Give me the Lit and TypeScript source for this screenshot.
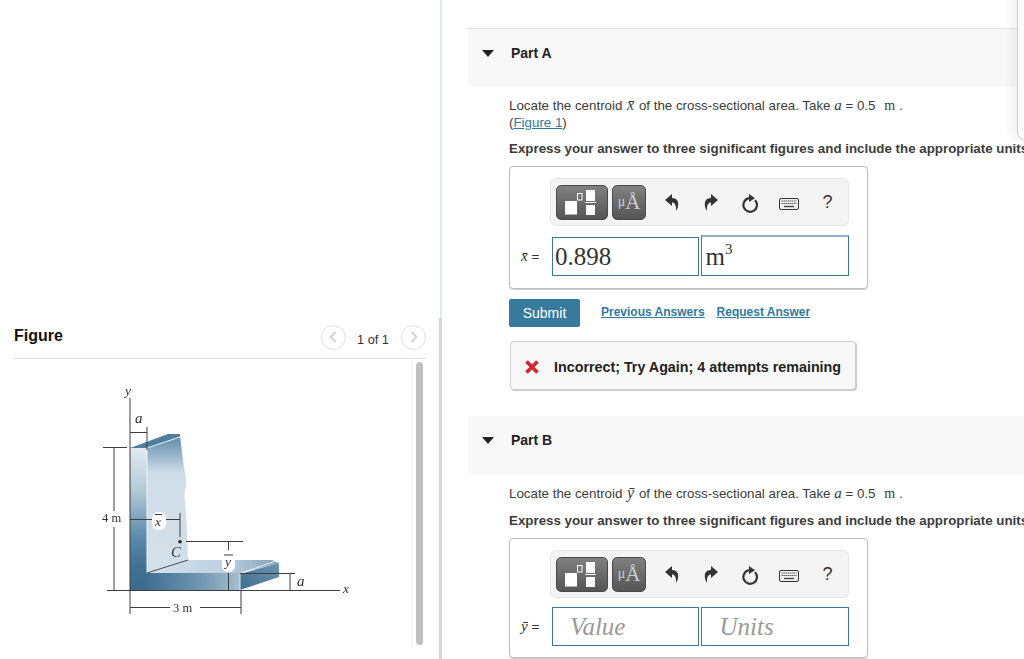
import { LitElement, html, css, svg } from "lit";
import { customElement } from "lit/decorators.js";

function figureArt() {
  return svg`
    <defs>
      <linearGradient id="front" gradientUnits="userSpaceOnUse" x1="0" y1="448" x2="0" y2="590">
        <stop offset="0" stop-color="#e2eaf0"/><stop offset="0.3" stop-color="#b4c9d8"/>
        <stop offset="0.62" stop-color="#5f8bab"/><stop offset="0.85" stop-color="#3f6f91"/><stop offset="1" stop-color="#3c6b8e"/>
      </linearGradient>
      <linearGradient id="back" x1="0" y1="0" x2="0" y2="1">
        <stop offset="0" stop-color="#5d8aa9"/><stop offset="0.27" stop-color="#cfdde8"/><stop offset="1" stop-color="#d3e0ea"/>
      </linearGradient>
      <linearGradient id="floorFront" gradientUnits="userSpaceOnUse" x1="147" y1="0" x2="240" y2="0">
        <stop offset="0" stop-color="#417092"/><stop offset="0.55" stop-color="#6e94af"/><stop offset="1" stop-color="#a6bdcf"/>
      </linearGradient>
      <linearGradient id="floorTop" x1="0" y1="0" x2="1" y2="0">
        <stop offset="0" stop-color="#d7e3ec"/><stop offset="0.6" stop-color="#bdd0de"/><stop offset="1" stop-color="#7fa0b8"/>
      </linearGradient>
      <linearGradient id="side" x1="0" y1="1" x2="1" y2="0">
        <stop offset="0" stop-color="#3d6d8f"/><stop offset="1" stop-color="#6d94af"/>
      </linearGradient>
    </defs>
    <path d="M130 448 L147 448 L180 437 L180 434 L168 434 Z" fill="#4f7e9f"/>
    <path d="M147 448 L180 436 C182 450 183 465 186 478 C187 486 184 490 184.5 498 C186 512 187 530 188 560 L147 573 Z" fill="url(#back)"/>
    <path d="M147 448 L180 437" stroke="#e9f0f5" stroke-width="1" fill="none"/>
    <path d="M147 573 L188 560 L272 560 L279 563 L240 573 Z" fill="url(#floorTop)"/>
    <path d="M130 448 H147 V590 H130 Z" fill="url(#front)"/>
    <path d="M147 573 H240 V590 H147 Z" fill="url(#floorFront)"/>
    <path d="M240 574 L279 563 V577 L240 590 Z" fill="url(#side)"/>
    <path d="M147 448 V573" stroke="#edf3f7" stroke-width="1"/>
    <path d="M240 574 V590" stroke="#dfe9f0" stroke-width="1"/>
    <path d="M241 573 L276 561" stroke="#e9f0f5" stroke-width="1" fill="none"/>
    <path d="M147 573 L188 560" stroke="#4a4a4a" stroke-width="1" fill="none"/>
    <rect x="152" y="512" width="14" height="18" rx="6" fill="#fff"/>
    <rect x="222" y="556" width="13" height="16" rx="6" fill="#fff"/>
    <g stroke="#3d3d3d" stroke-width="1" fill="none">
      <path d="M130 398 V590"/>
      <path d="M107 590.5 H340"/>
      <path d="M130 432.5 H147 M147 427 V450"/>
      <path d="M103 447.5 H127 M114 448 V511 M114 527 V590"/>
      <path d="M130 519.5 H152 M166 519.5 H180 M180 513 V537"/>
      <path d="M186 541.5 H243 M228.5 542 V550 M228.5 573 V590"/>
      <path d="M240 573.5 H295 M290 574 V590"/>
      <path d="M130 590 V614 M241 590 V614"/>
      <path d="M130 607.5 H170 M200 607.5 H241"/>
      <path d="M155 514.5 H162 M224 555 H233"/>
    </g>
    <circle cx="180" cy="541.7" r="1.8" fill="#222"/>
    <g class="fig-label">
      <text class="it" x="125" y="395">y</text>
      <text class="it big" x="135" y="423">a</text>
      <text x="102" y="522">4 m</text>
      <text class="it" x="155" y="526">x</text>
      <text class="it big" x="171" y="557">C</text>
      <text class="it" x="225" y="566">y</text>
      <text class="it big" x="297" y="586">a</text>
      <text class="it" x="343" y="593">x</text>
      <text x="173" y="612">3 m</text>
    </g>`;
}

const arrow = (flip: boolean) => html`<svg viewBox="0 0 14 17" width="14" height="17">
  <path transform=${flip ? "translate(14 0) scale(-1 1)" : ""} fill="#333" d="M7 0 L0 6 L7 12 V8.5 C10 8.5 11.5 12 11 17 C14 13 15 4 7 4 Z"/></svg>`;

const reload = html`<svg class="low-s" viewBox="0 0 16 19" width="16" height="19">
  <path d="M13 6.2 A6.8 6.8 0 1 1 8 4.2" fill="none" stroke="#333" stroke-width="2.2"/>
  <path d="M7 0 L13 4.2 L7 8 Z" fill="#333"/></svg>`;

const keyboard = html`<svg class="low" viewBox="0 0 20 12" width="20" height="12">
  <rect x="0.5" y="0.5" width="19" height="11" rx="1.5" fill="#f2f2f2" stroke="#333"/>
  <path d="M2.5 3 H17.5 M2.5 5.5 H17.5" stroke="#444" stroke-width="1.2" stroke-dasharray="1.3 .7"/>
  <path d="M5 8.5 H15" stroke="#444" stroke-width="1.4"/></svg>`;

const templates = html`<svg viewBox="0 0 31 25" width="31" height="25">
  <rect x="0" y="11" width="12" height="13.5" fill="#fff"/>
  <rect x="12.5" y="3.5" width="4.5" height="6.5" fill="none" stroke="#fff" stroke-width="1"/>
  <rect x="21" y="0" width="9" height="11" fill="#fff"/>
  <rect x="20" y="12" width="11" height="1" fill="#fff"/>
  <rect x="21" y="15" width="9" height="10" fill="#fff"/></svg>`;

@customElement("app-root")
export class AppRoot extends LitElement {
  static styles = css`
    :host { display: block; width: 1024px; height: 659px; overflow: hidden; position: relative; background: #fff;
      font-family: "Liberation Sans", Arial, sans-serif; color: #3a3a3a; }
    .page { display: flex; height: 659px; }
    .left { width: 439px; flex: none; padding: 323px 13px 0 13px; box-sizing: border-box; display: flex; flex-direction: column; }
    .rule { width: 3px; flex: none; background:
      linear-gradient(#c9d9ea, #c9d9ea) left bottom / 100% 341px no-repeat,
      linear-gradient(#e3e8ef, #e3e8ef) right top / 2px 318px no-repeat; }
    .fig-head { display: flex; align-items: center; height: 35px; border-bottom: 1px solid #dfe1e6; }
    .fig-title { font-size: 16px; font-weight: 700; color: #111; flex: 1; margin: -9px 0 0 1px; }
    .pager { display: flex; align-items: center; font-size: 12.8px; gap: 11px; color: #333; margin: -7px 0 0 0; }
    .pager span { margin: 4px 1px 0 0; }
    .circle { width: 25px; height: 25px; border: 1px solid #e2e2e2; border-radius: 50%; box-sizing: border-box; display: flex; align-items: center; justify-content: center; }
    .fig-body { display: flex; height: 286px; }
    svg.art { flex: 1; display: block; filter: blur(0.35px); }
    .track { width: 15px; box-sizing: border-box; padding: 3px 3px 0 4px; border-left: 1px solid #f2f2f2; }
    .thumb { height: 283px; background: #c0c0c0; border-radius: 4px; }
    .fig-label text { font: 12.5px "Liberation Serif", serif; fill: #333; }
    .fig-label text.it { font-style: italic; font-size: 13.5px; }
    .fig-label text.it.big { font-size: 15px; }

    .right { flex: 1; min-width: 0; padding: 28px 0 0 26px; }
    .part-head { height: 58px; background: #f8f8f8; display: flex; align-items: center; padding: 0 0 10px 14px; box-sizing: border-box; font-size: 14px; font-weight: 700; color: #222; gap: 17px; }
    .part-a { border-top: 1px solid #e2e2e2; height: 59px; }
    .caret { width: 0; height: 0; border-left: 6.5px solid transparent; border-right: 6.5px solid transparent; border-top: 7px solid #222; }
    .body { padding-left: 41px; font-size: 13.33px; line-height: 17px; color: #3c3c3c; white-space: nowrap; }
    .prompt { margin-top: 10px; }
    .math { font-family: "Liberation Serif", serif; font-style: italic; font-size: 15px; line-height: 0; }
    .math-bar { font-size: 16px; margin: 0 1px; }
    .unit { font-family: "Liberation Serif", serif; font-size: 14px; letter-spacing: .5px; margin-left: 5px; line-height: 0; }
    .fig-link { color: #2f7a9e; text-decoration: underline; }
    .instr { font-weight: 700; margin-top: 9px; }
    .answer { width: 359px; box-sizing: border-box; border: 1px solid #bdbdbd; border-radius: 4px; box-shadow: 0 1px 1px #ccc; margin-top: 9px; padding: 11px 18px 12px 11px; }
    .b-answer { height: 120px; }
    .toolbar { margin-left: 29px; height: 48px; box-sizing: border-box; background: #f4f4f4; border: 1px solid #e6e6e6; border-radius: 6px; display: flex; align-items: center; padding-left: 5px; }
    .btn { height: 35px; border-radius: 5px; border: 1px solid #4a4a4a; box-sizing: border-box; background: linear-gradient(#808080, #555); display: flex; align-items: center; justify-content: center; }
    .btn-t { width: 52px; padding-right: 3px; }
    .btn-u { width: 34px; margin-left: 4px; font: 14px "Liberation Serif", serif; color: #cfcfcf; white-space: nowrap; }
    .btn-u b { font-weight: 400; font-size: 21px; }
    .slot { width: 39px; display: flex; align-items: center; justify-content: center; font-size: 18px; color: #333; }
    .slot-first { margin-left: 6px; }
    .low { margin-top: 4px; }
    .low-s { margin-top: 2px; }
    .fields { display: flex; align-items: flex-end; margin-top: 9px; height: 41px; }
    .fields-b { margin-top: 7px; }
    .lab { width: 31px; font-size: 13.5px; color: #333; white-space: nowrap; margin-bottom: 11px; }
    .lab i { font-family: "Liberation Serif", serif; font-size: 15px; }
    .inp { box-sizing: border-box; width: 148px; height: 39px; border: 1px solid #3a7896; font: 25px/37px "Liberation Serif", serif; color: #333; padding-left: 2px; }
    .inp + .inp { margin-left: 2px; }
    .inp-up { height: 41px; border-top-color: #8fb3c8; border-top-width: 2px; padding: 1px 0 0 3px; }
    .inp sup { font-size: 15px; line-height: 0; vertical-align: 11px; }
    .ph { font-style: italic; color: #9a9a9a; padding-left: 17px; }
    .actions { display: flex; align-items: center; margin-top: 10px; }
    .submit { width: 71px; height: 28px; background: #387a9e; color: #fff; font-size: 14px; border-radius: 2px; display: flex; align-items: center; justify-content: center; }
    .links { margin-left: 21px; font-size: 12px; font-weight: 700; color: #2f7a9e; display: flex; gap: 12px; text-decoration: underline; margin-top: -1px; }
    .feedback { margin: 14px 0 26px 1px; width: 346px; height: 49px; box-sizing: border-box; border: 1px solid #cfcfcf; border-radius: 4px; background: #f8f8f8; box-shadow: 1px 1px 1px #c8c8c8; display: flex; align-items: center; padding: 3px 0 0 13px; gap: 14px; font-weight: 700; font-size: 14.3px; color: #222; }
    .prompt-b { margin-top: 11px; }
    .instr-b { margin-top: 10px; }
    .edge { position: absolute; right: -13px; top: -10px; width: 18px; height: 149px; border: 1px solid #ccc; border-radius: 0 0 0 9px; box-shadow: -6px 0 10px rgba(0, 0, 0, .05); background: #fcfcfc; }
  `;

  private toolbar() {
    return html`<div class="toolbar">
      <div class="btn btn-t">${templates}</div>
      <div class="btn btn-u">μ<b>Å</b></div>
      <div class="slot slot-first">${arrow(false)}</div>
      <div class="slot">${arrow(true)}</div>
      <div class="slot">${reload}</div>
      <div class="slot">${keyboard}</div>
      <div class="slot">?</div>
    </div>`;
  }

  render() {
    return html`<div class="page">
      <section class="left">
        <div class="fig-head">
          <div class="fig-title">Figure</div>
          <div class="pager">
            <div class="circle"><svg width="8" height="12" viewBox="0 0 8 12"><path d="M6.5 1 L1.5 6 L6.5 11" fill="none" stroke="#c4c4c4" stroke-width="1.3"/></svg></div>
            <span>1 of 1</span>
            <div class="circle"><svg width="8" height="12" viewBox="0 0 8 12"><path d="M1.5 1 L6.5 6 L1.5 11" fill="none" stroke="#c4c4c4" stroke-width="1.3"/></svg></div>
          </div>
        </div>
        <div class="fig-body">
          <svg class="art" viewBox="13 359 398 286" width="398" height="286">${figureArt()}</svg>
          <div class="track"><div class="thumb"></div></div>
        </div>
      </section>
      <div class="rule"></div>
      <main class="right">
        <div class="part-head part-a"><span class="caret"></span>Part A</div>
        <div class="body">
          <div class="prompt">Locate the centroid <span class="math math-bar">x̄</span> of the cross-sectional area. Take <span class="math">a</span> = 0.5 <span class="unit">m</span> .<br>(<span class="fig-link">Figure 1</span>)</div>
          <div class="instr">Express your answer to three significant figures and include the appropriate units.</div>
          <div class="answer">
            ${this.toolbar()}
            <div class="fields">
              <div class="lab"><i>x̄</i> =</div>
              <div class="inp">0.898</div>
              <div class="inp inp-up">m<sup>3</sup></div>
            </div>
          </div>
          <div class="actions">
            <div class="submit">Submit</div>
            <div class="links"><span>Previous Answers</span><span>Request Answer</span></div>
          </div>
          <div class="feedback">
            <svg width="16" height="16" viewBox="0 0 16 16"><path d="M2.5 2.5 L13.5 13.5 M13.5 2.5 L2.5 13.5" stroke="#d0282e" stroke-width="3.8"/></svg>
            <span>Incorrect; Try Again; 4 attempts remaining</span>
          </div>
        </div>
        <div class="part-head"><span class="caret"></span>Part B</div>
        <div class="body">
          <div class="prompt prompt-b">Locate the centroid <span class="math math-bar">ȳ</span> of the cross-sectional area. Take <span class="math">a</span> = 0.5 <span class="unit">m</span> .</div>
          <div class="instr instr-b">Express your answer to three significant figures and include the appropriate units.</div>
          <div class="answer b-answer">
            ${this.toolbar()}
            <div class="fields fields-b">
              <div class="lab"><i>ȳ</i> =</div>
              <div class="inp ph">Value</div>
              <div class="inp ph">Units</div>
            </div>
          </div>
        </div>
      </main>
      <div class="edge"></div>
    </div>`;
  }
}
